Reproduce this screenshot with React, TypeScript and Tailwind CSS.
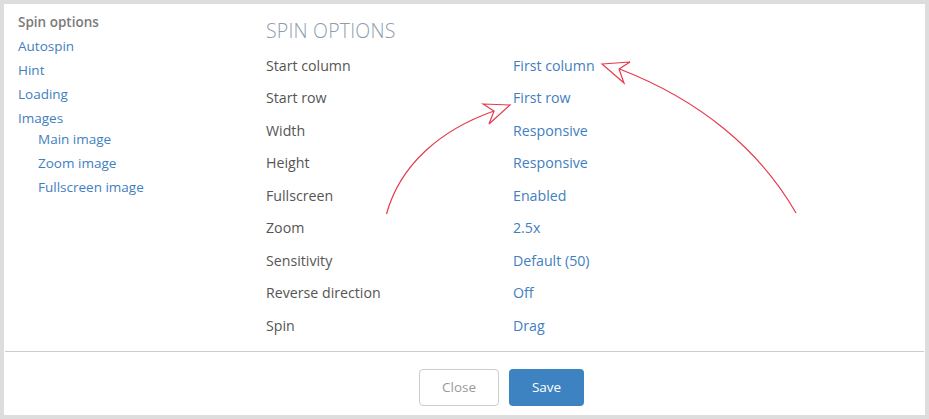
import React from 'react';

const menu = [
  { label: 'Autospin' },
  { label: 'Hint' },
  { label: 'Loading' },
  { label: 'Images' },
];

const subMenu = ['Main image', 'Zoom image', 'Fullscreen image'];

const options: [string, string][] = [
  ['Start column', 'First column'],
  ['Start row', 'First row'],
  ['Width', 'Responsive'],
  ['Height', 'Responsive'],
  ['Fullscreen', 'Enabled'],
  ['Zoom', '2.5x'],
  ['Sensitivity', 'Default (50)'],
  ['Reverse direction', 'Off'],
  ['Spin', 'Drag'],
];

function Arrows() {
  return (
    <svg
      className="absolute inset-0 pointer-events-none"
      width="929"
      height="419"
      viewBox="0 0 929 419"
      fill="none"
    >
      {/* arrow to "First row" */}
      <path d="M386.5 214 C 400 165, 440 130, 494 111" stroke="#e63a4e" strokeWidth="1.2" />
      <polygon points="483,104 510,105 489,124 494,111" stroke="#e63a4e" strokeWidth="1.2" strokeLinejoin="miter" />
      {/* arrow to "First column" */}
      <path d="M619.5 69 C 700 100, 760 150, 796 213" stroke="#e63a4e" strokeWidth="1.2" />
      <polygon points="602,64 630,62 619,69 624,83" stroke="#e63a4e" strokeWidth="1.2" strokeLinejoin="miter" />
    </svg>
  );
}

export default function App() {
  return (
    <div
      className="relative w-[929px] h-[419px] bg-[#dddddd] pt-[4px] pl-[4px] overflow-hidden"
      style={{ fontFamily: '"Open Sans", "Noto Sans", sans-serif' }}
    >
      <div className="w-[921px] h-[411px] bg-white flex flex-col">
        <div className="flex h-[348px] border-b border-[#cccccc] mx-px">
          {/* sidebar */}
          <div className="w-[261px] pl-[13px] pt-[6px] text-[13.5px] leading-[24px]">
            <div className="text-[#7a7a7a] font-semibold">Spin options</div>
            {menu.map((m) => (
              <div key={m.label} className="text-[#3f80c0]">{m.label}</div>
            ))}
            <div className="pl-[20px] -mt-[3px]">
              {subMenu.map((s) => (
                <div key={s} className="text-[#3f80c0]">{s}</div>
              ))}
            </div>
          </div>
          {/* main */}
          <div className="flex-1 pt-[12px]">
            <h2 className="text-[19.5px] leading-[30px] font-light text-[#8e9cad] tracking-[0.2px]">SPIN OPTIONS</h2>
            <div className="mt-[3px]">
              {options.map(([label, value]) => (
                <div key={label} className="flex items-center h-[32.5px] text-[14.2px]">
                  <div className="w-[247px] text-[#555555]">{label}</div>
                  <div className="text-[#3f80c0]">{value}</div>
                </div>
              ))}
            </div>
          </div>
        </div>
        <div className="flex gap-[10px] pl-[415px] pt-[17px]">
          <button className="w-[80px] h-[37px] rounded-[4px] border border-[#cccccc] bg-white text-[#9a9a9a] text-[13.5px]">
            Close
          </button>
          <button className="w-[75px] h-[37px] rounded-[4px] bg-[#3e83c1] text-white text-[13.5px]">
            Save
          </button>
        </div>
      </div>
      <Arrows />
    </div>
  );
}
